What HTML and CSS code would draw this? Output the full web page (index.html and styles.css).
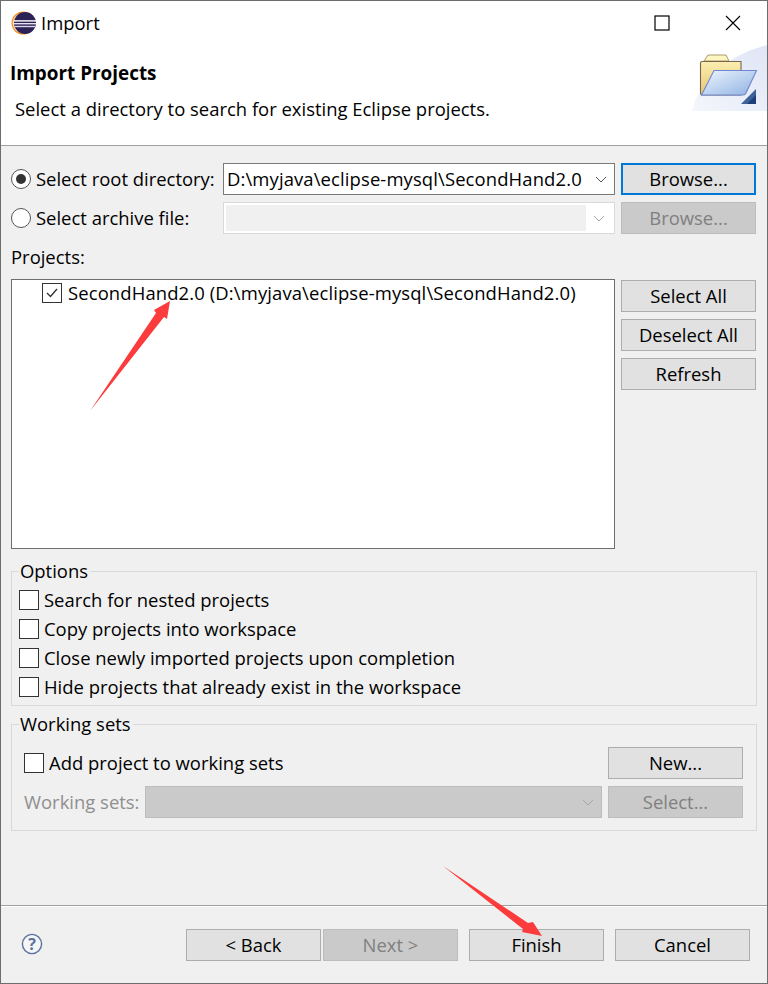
FILE: index.html
```html
<!DOCTYPE html>
<html lang="en">
<head>
<meta charset="utf-8">
<title>Import</title>
<link rel="stylesheet" href="styles.css">
</head>
<body>
<div class="window">
  <div class="titlebar">
    <svg class="app-icon" width="26" height="26" viewBox="0 0 26 26">
      <circle cx="12" cy="13" r="11.5" fill="#f7941e"/>
      <circle cx="12" cy="13" r="10.3" fill="#fbe3c4"/>
      <circle cx="14" cy="13" r="11" fill="#2c2255"/>
      <rect x="3" y="10.2" width="22" height="1.4" fill="#fff"/>
      <rect x="3" y="13" width="22" height="1.4" fill="#e6e4f2"/>
      <rect x="3.6" y="15.8" width="20.8" height="1.4" fill="#d9d6ea"/>
    </svg>
    <span class="title-text">Import</span>
    <div class="window-controls">
      <svg width="16" height="16" viewBox="0 0 16 16"><rect x="1" y="1" width="14" height="14" fill="none" stroke="#000" stroke-width="1.2"/></svg>
      <svg width="16" height="16" viewBox="0 0 16 16"><path d="M1 1L15 15M15 1L1 15" fill="none" stroke="#000" stroke-width="1.1"/></svg>
    </div>
  </div>
  <div class="header">
    <div class="header-title">Import Projects</div>
    <div class="header-desc">Select a directory to search for existing Eclipse projects.</div>
    <svg class="wizard-image" width="76" height="66" viewBox="0 0 76 66">
      <defs>
        <linearGradient id="wash" x1="0" y1="1" x2="1" y2="0"><stop offset="0" stop-color="#f4f6fc"/><stop offset="1" stop-color="#dfe5f5"/></linearGradient>
        <linearGradient id="back" x1="0" y1="0" x2="0" y2="1"><stop offset="0" stop-color="#fbeeb0"/><stop offset="1" stop-color="#e6c873"/></linearGradient>
        <linearGradient id="front" x1="0" y1="0" x2="1" y2="1"><stop offset="0" stop-color="#eef7fe"/><stop offset="1" stop-color="#8fb0e2"/></linearGradient>
      </defs>
      <path d="M1 66C8 36 38 8 77 0V66Z" fill="url(#wash)"/>
      <path d="M13 16L17 10H35L38 16Z" fill="#fdf6c0" stroke="#a89a70"/>
      <path d="M11 16.5Q9.500 16.500 9.500 18V48Q9.500 50 12 50H50V16.500Z" fill="url(#back)" stroke="#7d6450" stroke-width="1.1"/>
      <path d="M23 25.500H65.500L55 48Q54 50 52 50H10.500Z" fill="url(#front)" stroke="#6e88cf" stroke-width="1.1"/>
      <path d="M50 59L65 44V59Z" fill="#3d6299"/>
      <path d="M56 59L65 50V59Z" fill="#1f3d78"/>
    </svg>
  </div>
  <div class="content">
    <div class="source-row">
      <span class="radio radio-on"></span><span class="source-label">Select root directory:</span>
      <div class="combo"><span class="combo-text path-text">D:\myjava\eclipse-mysql\SecondHand2.0</span>
        <svg class="chevron" width="12" height="7" viewBox="0 0 12 7"><path d="M1 1L6 6L11 1" fill="none" stroke="#555"/></svg>
      </div>
      <div class="btn btn-focus">Browse...</div>
    </div>
    <div class="source-row">
      <span class="radio"></span><span class="source-label">Select archive file:</span>
      <div class="combo combo-off"><span class="combo-fill"></span>
        <svg class="chevron" width="12" height="7" viewBox="0 0 12 7"><path d="M1 1L6 6L11 1" fill="none" stroke="#aaa"/></svg>
      </div>
      <div class="btn btn-off">Browse...</div>
    </div>
    <div class="projects-label">Projects:</div>
    <div class="projects">
      <div class="project-list">
        <div class="project-item">
          <span class="check check-on"><svg width="14" height="12" viewBox="0 0 14 12"><path d="M2 6L5.500 9.500L12 2" fill="none" stroke="#333" stroke-width="1.4"/></svg></span>
          <span class="path-text">SecondHand2.0 (D:\myjava\eclipse-mysql\SecondHand2.0)</span>
        </div>
      </div>
      <div class="side-buttons">
        <div class="btn">Select All</div>
        <div class="btn">Deselect All</div>
        <div class="btn">Refresh</div>
      </div>
    </div>
    <div class="group group-options">
      <span class="legend">Options</span>
      <div class="option"><span class="check"></span>Search for nested projects</div>
      <div class="option"><span class="check"></span>Copy projects into workspace</div>
      <div class="option"><span class="check"></span>Close newly imported projects upon completion</div>
      <div class="option"><span class="check"></span>Hide projects that already exist in the workspace</div>
    </div>
    <div class="group group-sets">
      <span class="legend">Working sets</span>
      <div class="sets-row">
        <div class="option"><span class="check"></span>Add project to working sets</div>
        <div class="btn">New...</div>
      </div>
      <div class="sets-row">
        <span class="sets-label">Working sets:</span>
        <div class="combo-disabled">
          <svg class="chevron" width="12" height="7" viewBox="0 0 12 7"><path d="M1 1L6 6L11 1" fill="none" stroke="#a6a6a6"/></svg>
        </div>
        <div class="btn btn-off">Select...</div>
      </div>
    </div>
  </div>
  <div class="footer">
    <svg class="help" width="22" height="22" viewBox="0 0 22 22">
      <circle cx="11" cy="11" r="9.600" fill="#f4f6fa" stroke="#5d7298" stroke-width="1.4"/>
      <text x="11" y="17" text-anchor="middle" class="help-mark">?</text>
    </svg>
    <div class="footer-buttons">
      <div class="btn">&lt; Back</div>
      <div class="btn btn-off">Next &gt;</div>
      <div class="btn btn-finish">Finish</div>
      <div class="btn btn-cancel">Cancel</div>
    </div>
  </div>
  <svg class="annotations" width="766" height="982" viewBox="0 0 766 982">
    <path d="M89 410L155 312L153 309L169 300L166 318L163 316Z" fill="#fc3c3c"/>
    <path d="M442 865L527 922L532 921L541 935L521 931L522 928Z" fill="#fc3c3c"/>
  </svg>
</div>
</body>
</html>
```

FILE: styles.css
```css
* { box-sizing: border-box; }
html, body { margin: 0; padding: 0; }
body {
  width: 768px;
  height: 984px;
  overflow: hidden;
  font-family: "Open Sans", "Noto Sans", sans-serif;
  font-size: 18.45px;
  line-height: 24px;
  color: #000;
  background: #f0f0f0;
}
.window {
  position: relative;
  width: 768px;
  height: 984px;
  border: 1px solid #6d6d6d;
  display: flex;
  flex-direction: column;
  background: #f0f0f0;
}
.titlebar {
  height: 43px;
  flex: none;
  display: flex;
  align-items: center;
  padding-left: 10px;
  background: #fff;
}
.app-icon { margin-right: 4px; }
.window-controls {
  margin-left: auto;
  margin-right: 26px;
  display: flex;
  gap: 55px;
  margin-top: 1px;
}
.header {
  position: relative;
  height: 102px;
  flex: none;
  background: #fff;
  border-bottom: 1px solid #a0a0a0;
  padding-left: 9px;
}
.header-title {
  font-weight: 700;
  font-size: 18.9px;
  line-height: 24px;
  margin-top: 17px;
}
.header-desc { margin: 12px 0 0 5px; }
.wizard-image { position: absolute; right: 0; top: 1px; }
.content {
  flex: 1;
  padding: 17px 10px 0;
  min-height: 0;
}
.source-row {
  display: flex;
  align-items: center;
  height: 32px;
  margin-bottom: 7px;
}
.radio {
  width: 20px;
  height: 20px;
  border-radius: 50%;
  border: 1px solid #555;
  background: #fff;
  flex: none;
  display: flex;
  align-items: center;
  justify-content: center;
  margin-right: 5px;
}
.radio-on::after {
  content: "";
  width: 10px;
  height: 10px;
  border-radius: 50%;
  background: #333;
}
.source-label { width: 187px; flex: none; white-space: nowrap; }
.path-text { letter-spacing: 0.12px; }
.combo {
  width: 392px;
  height: 32px;
  flex: none;
  border: 1px solid #7a7a7a;
  background: #fff;
  display: flex;
  align-items: center;
  padding-left: 3px;
  margin-right: 6px;
}
.combo-text { flex: 1; white-space: nowrap; }
.chevron { flex: none; margin: 0 7px 0 auto; }
.combo-off { border-color: #d9d9d9; padding: 2px; }
.combo-fill { width: 360px; height: 100%; background: #f0f0f0; }
.btn {
  width: 135px;
  height: 32px;
  flex: none;
  border: 1px solid #adadad;
  background: #e1e1e1;
  display: flex;
  align-items: center;
  justify-content: center;
  white-space: nowrap;
}
.btn-focus { border: 2px solid #0078d7; }
.btn-off { background: #cacaca; color: #808080; border-color: #bdbdbd; }
.projects-label { margin-top: 11px; height: 23px; }
.projects {
  display: flex;
  margin-top: 11px;
  height: 270px;
}
.project-list {
  width: 604px;
  height: 270px;
  flex: none;
  border: 1px solid #6e6e6e;
  background: #fff;
  margin-right: 6px;
}
.project-item {
  display: flex;
  align-items: center;
  height: 24px;
  padding-left: 30px;
  margin-top: 1px;
  white-space: nowrap;
}
.check {
  width: 20px;
  height: 20px;
  flex: none;
  border: 1px solid #333;
  background: #fff;
  margin-right: 5px;
  display: inline-flex;
  align-items: center;
  justify-content: center;
}
.check-on { margin-right: 6px; }
.side-buttons {
  display: flex;
  flex-direction: column;
  gap: 7px;
  padding-top: 1px;
}
.group {
  position: relative;
  width: 746px;
  border: 1px solid #d9d9d9;
}
.legend {
  position: absolute;
  left: 7px;
  top: -13px;
  padding: 0 2px 0 1px;
  background: #f0f0f0;
  line-height: 24px;
}
.group-options {
  margin-top: 22px;
  height: 135px;
  padding: 13px 0 0 7px;
}
.group-options .option { height: 29px; }
.option {
  display: flex;
  align-items: center;
  white-space: nowrap;
}
.group-sets {
  margin-top: 18px;
  height: 107px;
  padding: 22px 13px 0 12px;
}
.sets-row {
  display: flex;
  align-items: center;
  justify-content: space-between;
  height: 32px;
  margin-bottom: 7px;
}
.sets-label { color: #8f8f8f; width: 121px; flex: none; white-space: nowrap; }
.combo-disabled {
  width: 457px;
  height: 32px;
  flex: none;
  background: #cacaca;
  border: 1px solid #bdbdbd;
  display: flex;
  align-items: center;
  margin-right: 6px;
}
.footer {
  flex: none;
  height: 78px;
  border-top: 1px solid #a0a0a0;
  box-shadow: inset 0 1px 0 #fff;
  position: relative;
  display: flex;
}
.help { margin: 27px 0 0 20px; flex: none; }
.help-mark { font: 700 16px "Open Sans", sans-serif; fill: #5d7298; }
.footer-buttons {
  display: flex;
  margin: 23px 0 0 143px;
  gap: 2px;
}
.btn-finish { margin-left: 9px; }
.btn-cancel { margin-left: 9px; }
.annotations { position: absolute; left: 0; top: 0; pointer-events: none; }
```
